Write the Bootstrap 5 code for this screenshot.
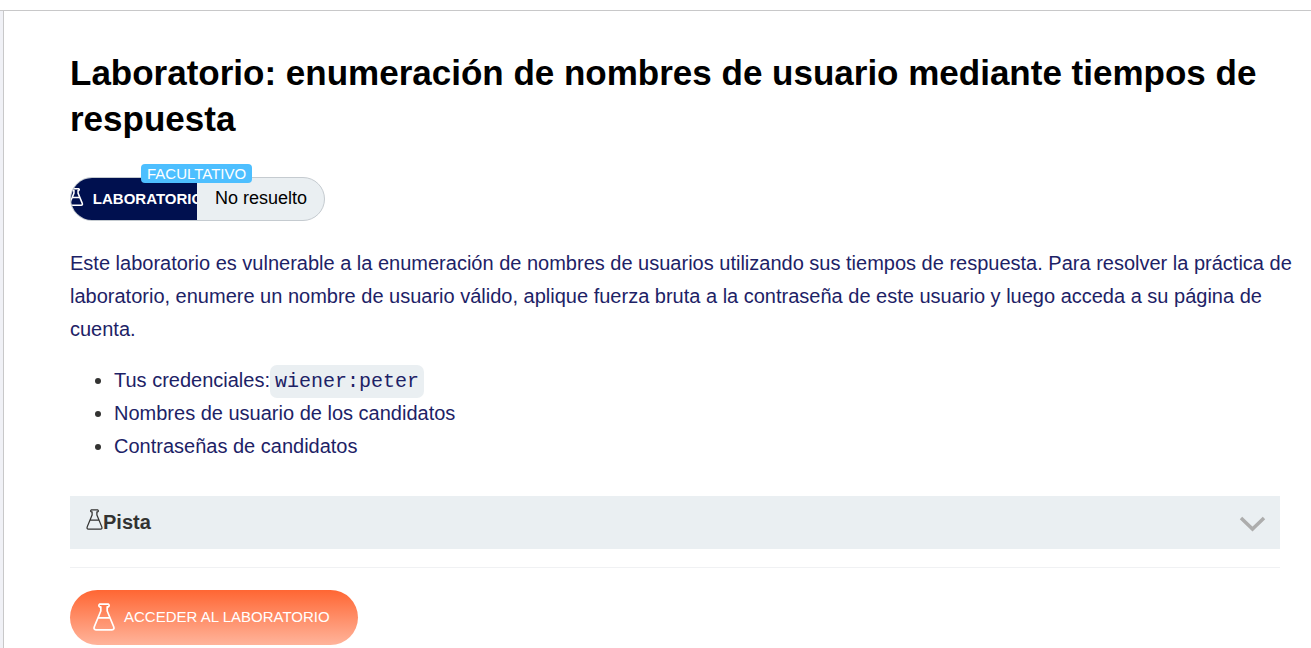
<!DOCTYPE html>
<html lang="es">
<head>
<meta charset="utf-8">
<meta name="viewport" content="width=device-width, initial-scale=1">
<title>Laboratorio: enumeración de nombres de usuario</title>
<link href="https://cdn.jsdelivr.net/npm/bootstrap@5.3.0/dist/css/bootstrap.min.css" rel="stylesheet">
<style>
  body { font-family: "Liberation Sans", Arial, sans-serif; color: #333332; background: #fff; overflow-x: hidden; }
  .page-top { height: 11px; border-bottom: 1px solid #c8c8c9; }
  .side-strip { width: 4px; background: #f0f1f6; border-right: 1px solid #c8c8c9; }
  .lab-content { padding: 39px 31px 3px 66px; min-width: 0; }
  .lab-title { font-size: 35px; line-height: 46px; font-weight: 700; color: #000; margin-bottom: 35px; }
  .lab-status { width: 255px; height: 44px; margin-bottom: 26px; }
  .status-pill { border: 1px solid #c5cbd0; border-radius: 22px; background: #eaeff2; }
  .status-kind { width: 126px; padding-left: 3px; background: #00104f; color: #fff; font-size: 15px; font-weight: 700; }
  .status-kind span { margin-left: 9px; }
  .status-text { color: #000; font-size: 18px; line-height: 40px; padding-left: 18px; }
  .level-tag { top: -13px; left: 71px; padding: 0 6px; border-radius: 4px; background: #4dbfff; color: #fff; font-size: 15px; line-height: 19px; }
  .lab-text { font-size: 20px; line-height: 33px; color: #1d2266; margin: 0 -16px 18px 0; }
  .lab-list { font-size: 20px; line-height: 33px; padding-left: 44px; margin-bottom: 33px; }
  .lab-list span, .lab-list a { color: #1d2266; }
  .lab-list code { font-family: "Liberation Mono", monospace; font-size: 20px; line-height: 20px; color: #1d2266; background: #eaeff2; border-radius: 7px; padding: 5px; }
  .hint-toggle { height: 53px; padding: 0 14px 2px 16px; border: 0; background: #eaeff2; color: #333332; font-size: 20px; font-weight: 700; }
  .rule { border-top: 1px solid #f0f1f3; opacity: 1; margin: 18px 0 22px; }
  .btn-lab { --bs-btn-color: #fff; --bs-btn-hover-color: #fff; height: 55px; border: 0; border-radius: 28px; padding: 0 28px 0 23px; font-size: 15px; background: linear-gradient(#ff6633, #ffb49b); }
  .btn-lab svg { margin: 0 9px 2px 0; }
</style>
</head>
<body>
<svg class="d-none" xmlns="http://www.w3.org/2000/svg">
  <symbol id="flask" viewBox="0 0 22 28">
    <path d="M6.600 1.200h8.800q1.500 1.300 0 2.600h-1.200V8L20.600 23.500Q21.800 26.800 19 26.800H3Q.2 26.800 1.400 23.500L7.800 8V3.800H6.600q-1.500-1.300 0-2.600zM5.100 14.800h11.800" fill="none" stroke="currentColor" stroke-linecap="round" stroke-linejoin="round"/>
  </symbol>
</svg>
<div class="page-top"></div>
<div class="d-flex">
  <aside class="side-strip flex-shrink-0"></aside>
  <main class="lab-content flex-grow-1">
    <h1 class="lab-title">Laboratorio: enumeración de nombres de usuario mediante tiempos de respuesta</h1>
    <div class="lab-status position-relative">
      <div class="status-pill d-flex h-100 overflow-hidden">
        <div class="status-kind d-flex align-items-center justify-content-center overflow-hidden flex-shrink-0">
          <svg class="flex-shrink-0 mb-1" width="16" height="18" stroke-width="2.4"><use href="#flask"/></svg>
          <span>LABORATORIO</span>
        </div>
        <div class="status-text">No resuelto</div>
      </div>
      <span class="level-tag position-absolute">FACULTATIVO</span>
    </div>
    <p class="lab-text">Este laboratorio es vulnerable a la enumeración de nombres de usuarios utilizando sus tiempos de respuesta. Para resolver la práctica de laboratorio, enumere un nombre de usuario válido, aplique fuerza bruta a la contraseña de este usuario y luego acceda a su página de cuenta.</p>
    <ul class="lab-list">
      <li><span>Tus credenciales:</span><code>wiener:peter</code></li>
      <li><a class="text-decoration-none" href="#usuarios">Nombres de usuario de los candidatos</a></li>
      <li><a class="text-decoration-none" href="#claves">Contraseñas de candidatos</a></li>
    </ul>
    <button class="hint-toggle d-flex align-items-center w-100" type="button" aria-expanded="false">
      <svg class="mb-1" width="17" height="21" stroke-width="1.7"><use href="#flask"/></svg>
      <span>Pista</span>
      <svg class="ms-auto mt-1" width="27" height="16" viewBox="0 0 27 16"><path d="M2 2l11.5 11L25 2" fill="none" stroke="#adadad" stroke-width="3.5"/></svg>
    </button>
    <hr class="rule">
    <a class="btn btn-lab d-inline-flex align-items-center" href="#acceder">
      <svg width="22" height="28" stroke-width="1.7"><use href="#flask"/></svg>
      <span>ACCEDER AL LABORATORIO</span>
    </a>
  </main>
</div>
<script src="https://cdn.jsdelivr.net/npm/bootstrap@5.3.0/dist/js/bootstrap.bundle.min.js"></script>
</body>
</html>
